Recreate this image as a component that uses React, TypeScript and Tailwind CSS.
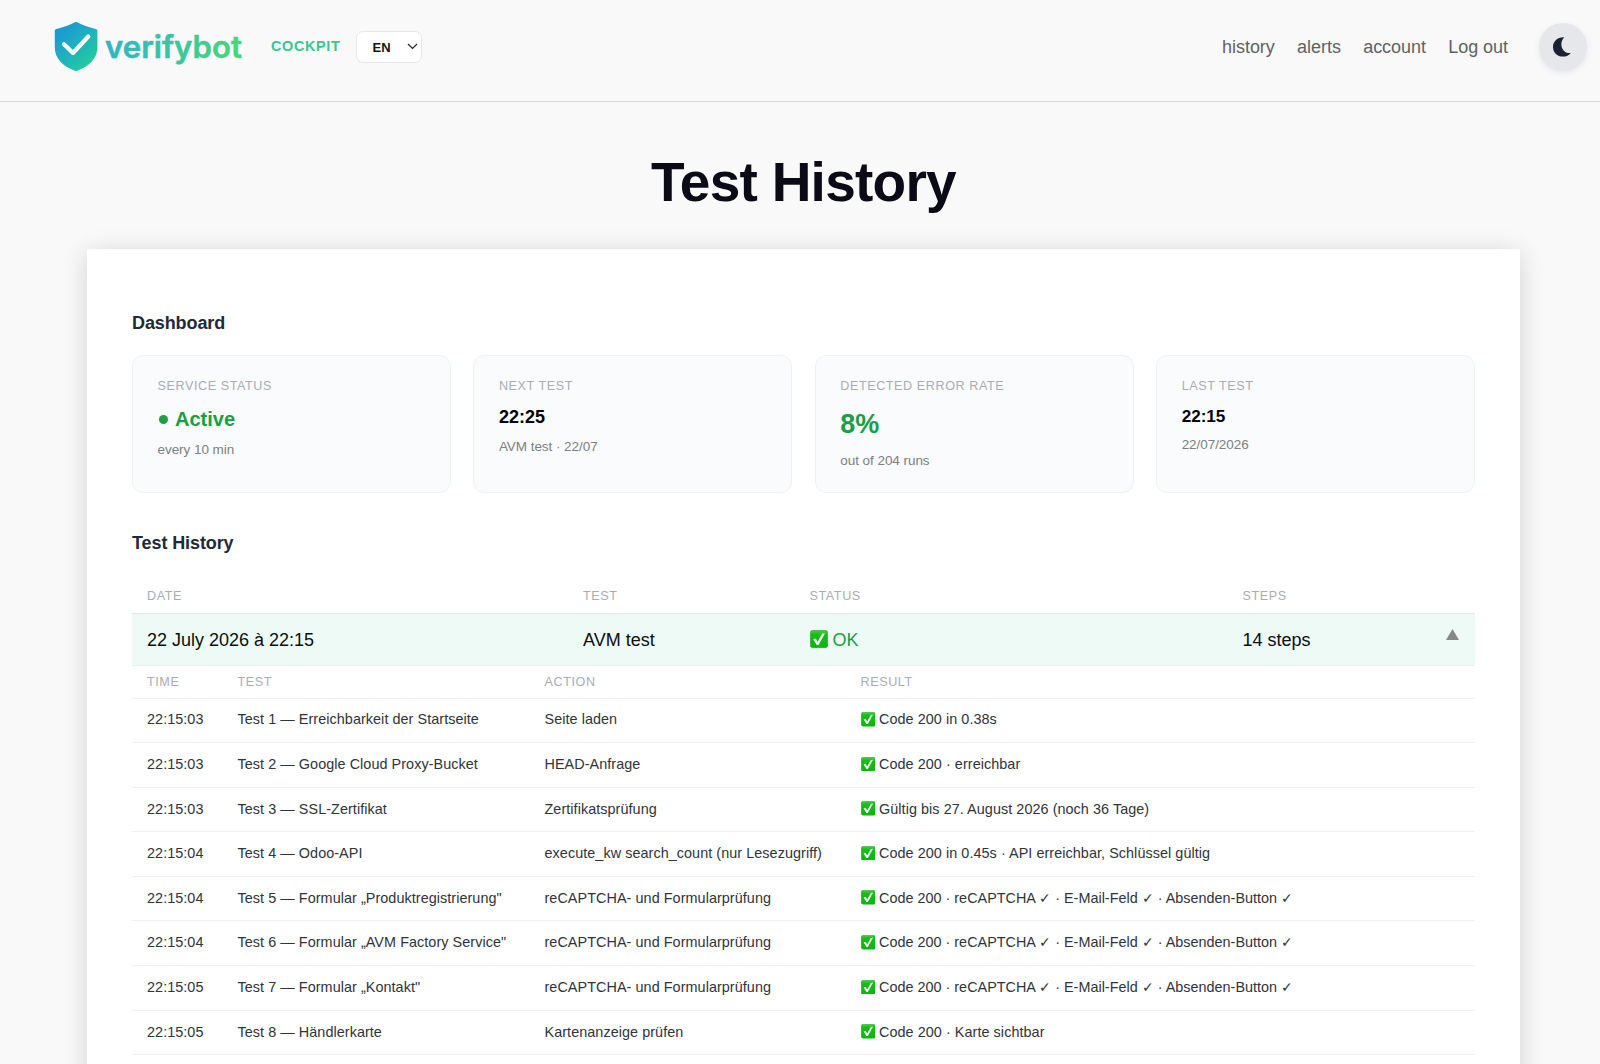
import clsx from "clsx";

const navLinks = ["history", "alerts", "account", "Log out"];

const stats = [
  { label: "Service status", value: "Active", note: "every 10 min", valueClass: "mt-[7.5px] text-[20px]/[32.5px] text-[#1b9e44]", dot: true },
  { label: "Next test", value: "22:25", note: "AVM test · 22/07", valueClass: "mt-[7px] text-[18px]/[29.7px] text-black" },
  { label: "Detected error rate", value: "8%", note: "out of 204 runs", valueClass: "mt-[6px] text-[27px]/[44.5px] text-[#1b9e44]" },
  { label: "Last test", value: "22:15", note: "22/07/2026", valueClass: "mt-[7.5px] text-[17.1px]/[27.500px] text-black" },
];

const formResult = "Code 200 · reCAPTCHA ✓ · E-Mail-Feld ✓ · Absenden-Button ✓";

const steps = [
  { time: "22:15:03", test: "Test 1 — Erreichbarkeit der Startseite", action: "Seite laden", result: "Code 200 in 0.38s" },
  { time: "22:15:03", test: "Test 2 — Google Cloud Proxy-Bucket", action: "HEAD-Anfrage", result: "Code 200 · erreichbar" },
  { time: "22:15:03", test: "Test 3 — SSL-Zertifikat", action: "Zertifikatsprüfung", result: "Gültig bis 27. August 2026 (noch 36 Tage)" },
  { time: "22:15:04", test: "Test 4 — Odoo-API", action: "execute_kw search_count (nur Lesezugriff)", result: "Code 200 in 0.45s · API erreichbar, Schlüssel gültig" },
  { time: "22:15:04", test: "Test 5 — Formular „Produktregistrierung\"", action: "reCAPTCHA- und Formularprüfung", result: formResult },
  { time: "22:15:04", test: "Test 6 — Formular „AVM Factory Service\"", action: "reCAPTCHA- und Formularprüfung", result: formResult },
  { time: "22:15:05", test: "Test 7 — Formular „Kontakt\"", action: "reCAPTCHA- und Formularprüfung", result: formResult },
  { time: "22:15:05", test: "Test 8 — Händlerkarte", action: "Kartenanzeige prüfen", result: "Code 200 · Karte sichtbar" },
];

const runGrid = "grid grid-cols-[436px_226.5px_433px_1fr_29px] items-center pl-[15px]";
const stepGrid = "grid grid-cols-[90.5px_307px_316px_1fr] items-center pl-[15px]";
const labelText = "text-[12.6px] uppercase tracking-[0.58px] text-[#a9adb3]";

function Logo() {
  return (
    <svg width="190" height="56" viewBox="0 0 190 56" className="shrink-0">
      <defs>
        <linearGradient id="shield" x1="0" y1="0" x2="0.75" y2="1">
          <stop offset="0.1" stopColor="#1b96d3" />
          <stop offset="0.55" stopColor="#1eb1c0" />
          <stop offset="1" stopColor="#22cf97" />
        </linearGradient>
        <linearGradient id="wordmark" x1="0" y1="0" x2="1" y2="0">
          <stop offset="0" stopColor="#2eb6c4" />
          <stop offset="0.5" stopColor="#3cc4a0" />
          <stop offset="1" stopColor="#4ad679" />
        </linearGradient>
      </defs>
      <path
        d="M20.8 3.300c0.900-0.500 1.500-0.500 2.400 0 5 2.900 11.500 5 18.500 6.600 1.200 0.300 1.700 0.900 1.700 2.100V28c0 11.500-8 19-20.200 23.800-0.900 0.300-1.500 0.300-2.400 0C8.600 47 0.800 39.500 0.800 28V12c0-1.200 0.500-1.800 1.700-2.100C9.500 8.300 15.800 6.200 20.800 3.300z"
        fill="url(#shield)"
      />
      <path d="M10 25.300l9 8.700L34.300 17.500" fill="none" stroke="#fff" strokeWidth="4.200" strokeLinecap="round" strokeLinejoin="round" />
      <text x="51" y="38.500" fill="url(#wordmark)" stroke="url(#wordmark)" strokeWidth="0.500" fontSize="31" fontWeight="600" textLength="137" lengthAdjust="spacingAndGlyphs" className="font-['Inter',sans-serif]">
        verifybot
      </text>
    </svg>
  );
}

function CheckBadge({ className }: { className?: string }) {
  return (
    <svg viewBox="0 0 18 18" className={clsx("shrink-0", className)}>
      <defs>
        <linearGradient id="badge" x1="0" y1="0" x2="0" y2="1">
          <stop offset="0" stopColor="#43cf45" />
          <stop offset="0.25" stopColor="#16bd17" />
          <stop offset="1" stopColor="#08b80b" />
        </linearGradient>
      </defs>
      <rect x="0.300" y="0.300" width="17.400" height="17.400" rx="2.600" fill="url(#badge)" stroke="#2f9d35" strokeWidth="0.600" />
      <path d="M3.200 9.400l2.500-1 2 3.300L12.200 3.600l2.700-0.200L8.500 15H6.900z" fill="#fff" />
    </svg>
  );
}

function Header() {
  return (
    <header className="flex h-[102px] items-start justify-between border-b border-[#dcdcdc] pt-[22px] pr-[13px] pl-[54px]">
      <div className="flex h-[49px] items-center">
        <Logo />
        <span className="ml-[27px] text-[14.4px] font-bold tracking-[0.68px] text-[#38c791]">COCKPIT</span>
        <button className="ml-[15px] flex h-8 w-[66px] items-center justify-between rounded-[7px] border border-[#e7e7e7] bg-white pr-[3px] pl-4 text-[13px] font-bold text-[#151515]">
          <span className="mt-[2px]">EN</span>
          <svg width="11" height="7" viewBox="0 0 11 7" fill="none" stroke="#222" strokeWidth="1.200">
            <path d="M1 1l4.500 4.500L10 1" />
          </svg>
        </button>
      </div>
      <div className="flex h-[49px] items-center">
        <nav className="mt-[2px] flex gap-[22.3px] text-[18px] tracking-[-0.04px] text-[#626262]">
          {navLinks.map((link) => (
            <a key={link}>{link}</a>
          ))}
        </nav>
        <button className="ml-[31px] flex size-12 items-center justify-center rounded-full bg-[#e5e7eb] shadow-[0_2px_6px_rgba(0,0,0,0.08)]">
          <svg width="20" height="20" viewBox="0 0 20 20" className="mr-[2px]">
            <path d="M12 0.400C6 0 1 4.200 1 10s4.300 9.600 9.900 9.600c3.400 0 6.100-1.300 7.900-3.700C11 17.400 6.200 7 12 0.400z" fill="#1c2135" />
          </svg>
        </button>
      </div>
    </header>
  );
}

function Dashboard() {
  return (
    <section>
      <h2 className="text-[18px] leading-7 font-bold tracking-[-0.1px] text-[#1f2937]">Dashboard</h2>
      <div className="mt-[18.500px] grid grid-cols-4 gap-[22.5px]">
        {stats.map((stat) => (
          <div key={stat.label} className="h-[138px] rounded-[11px] border border-[#edf1f2] bg-[#fafbfc] pt-[19.500px] pl-[24.500px]">
            <p className={clsx(labelText, "leading-5")}>{stat.label}</p>
            <p className={clsx("flex items-center font-bold", stat.valueClass)}>
              {stat.dot && <span className="mt-px mr-[7px] ml-[1.500px] size-[9px] rounded-full bg-[#1b9e44]" />}
              {stat.value}
            </p>
            <p className="mt-[4.500px] text-[13.5px] leading-5 tracking-[-0.05px] text-[#7d7f82]">{stat.note}</p>
          </div>
        ))}
      </div>
    </section>
  );
}

function HistoryTable() {
  return (
    <section className="mt-[35.500px]">
      <h2 className="text-[18px] leading-7 font-bold tracking-[-0.1px] text-[#1f2937]">Test History</h2>
      <div className={clsx(runGrid, labelText, "mt-[23px] h-[34px] border-b border-[#e3e8e7]")}>
        <span>Date</span>
        <span>Test</span>
        <span>Status</span>
        <span>Steps</span>
      </div>
      <div className={clsx(runGrid, "h-[52.500px] border-b border-[#e9efed] bg-[#edfaf6] pt-[2px] text-[18px] text-[#0b0f0e]")}>
        <span>22 July 2026 à 22:15</span>
        <span>AVM test</span>
        <span className="flex items-center text-[#1b9e44]">
          <CheckBadge className="-mt-[3px] mr-[5px] size-[18px]" />
          OK
        </span>
        <span>14 steps</span>
        <svg width="13" height="11" viewBox="0 0 13 11" className="-mt-[11px]">
          <path d="M6.500 0L13 11H0z" fill="#858988" />
        </svg>
      </div>
      <div className={clsx(stepGrid, labelText, "h-[32.500px] border-b border-[#f0f1f2] pt-px")}>
        <span>Time</span>
        <span>Test</span>
        <span>Action</span>
        <span>Result</span>
      </div>
      {steps.map((step) => (
        <div key={step.test} className={clsx(stepGrid, "h-[44.600px] border-b border-[#f0f1f2] text-[14.4px] tracking-[0.06px] text-[#30343a]")}>
          <span>{step.time}</span>
          <span>{step.test}</span>
          <span>{step.action}</span>
          <span className={clsx("flex items-center whitespace-nowrap", step.result === formResult && "tracking-[0.01px]")}>
            <CheckBadge className="-mt-[2px] mr-1 size-[14.500px]" />
            {step.result}
          </span>
        </div>
      ))}
    </section>
  );
}

export default function App() {
  return (
    <div className="h-[1064px] overflow-hidden bg-[#f9f9f9] font-['Liberation_Sans',Arial,sans-serif]">
      <Header />
      <main className="pr-20 pl-[87px]">
        <h1 className="mt-12 text-center text-[55px] leading-[64px] font-bold tracking-[-0.75px] text-[#0a0b16]">Test History</h1>
        <div className="mt-[35px] h-[900px] bg-white px-[45px] pt-[59.500px] shadow-[0_4px_24px_rgba(0,0,0,0.16)]">
          <Dashboard />
          <HistoryTable />
        </div>
      </main>
    </div>
  );
}
